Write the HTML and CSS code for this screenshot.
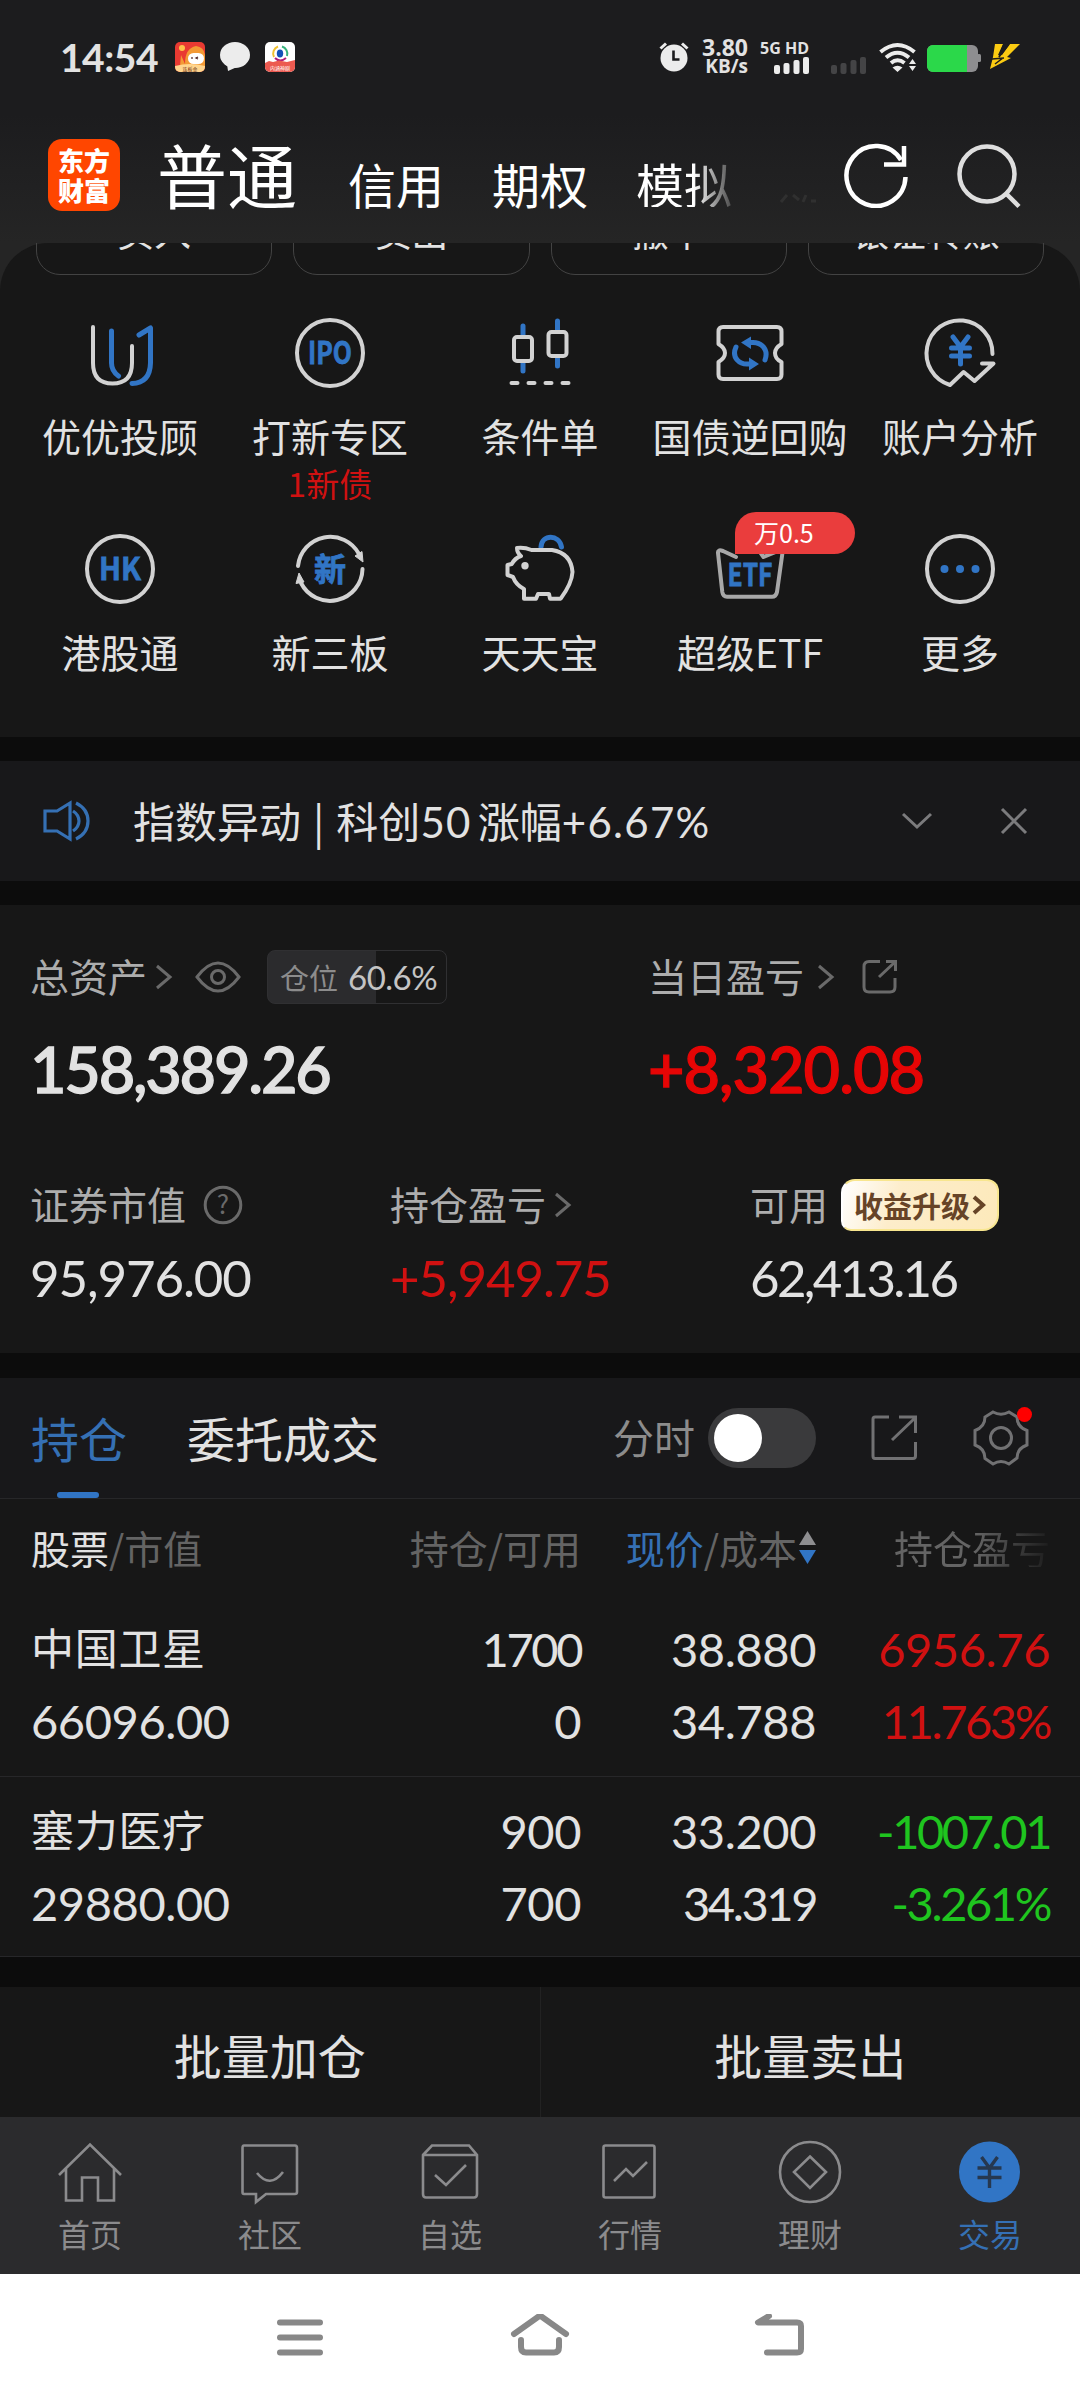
FILE: index.html
```html
<!DOCTYPE html>
<html lang="zh-CN">
<head>
  <meta charset="UTF-8">
  <title>东方财富 - 交易</title>
  <link rel="stylesheet" href="styles.css">
</head>
<body>

  <!-- 状态栏 -->
  <div class="status-bar">
    <span class="time">14:54</span>
    <svg class="app-icon" width="30" height="30" viewBox="0 0 30 30">
      <rect width="30" height="30" rx="5" fill="#e93a32"/>
      <path d="M5 24 L6 13 L10 22 Q10 6 21 4 Q29 5 30 13 V24 Z" fill="#f39a35"/>
      <circle cx="7" cy="6" r="3" fill="#ffc14a"/>
      <rect x="13" y="11" width="16" height="11" rx="5.5" fill="#fff"/>
      <path d="M17 15v2M23 15l-2 1 2 1" stroke="#4a2020" stroke-width="1.2" fill="none"/>
      <path d="M0 24 Q15 20 30 24 V25 a5 5 0 0 1 -5 5 H5 a5 5 0 0 1 -5 -5Z" fill="#ffd58e"/>
      <text x="15" y="29" font-size="5" text-anchor="middle" fill="#6b2a10">连板金</text>
    </svg>
    <svg class="app-icon" width="30" height="30" viewBox="0 0 30 30">
      <ellipse cx="15" cy="13" rx="15" ry="13" fill="#ececec"/>
      <path d="M7 22 L8 29 L17 25 Z" fill="#ececec"/>
    </svg>
    <svg class="app-icon" width="30" height="30" viewBox="0 0 30 30">
      <rect width="30" height="30" rx="5" fill="#fff"/>
      <path d="M9 15 A7.5 7.5 0 0 1 13 4.5" stroke="#f0c12f" stroke-width="2" fill="none"/>
      <path d="M17 4.5 A7.5 7.5 0 0 1 22 14" stroke="#37b27c" stroke-width="2" fill="none"/>
      <path d="M10 16 Q15 21 21 16" stroke="#b01f78" stroke-width="2" fill="none"/>
      <ellipse cx="15" cy="11.5" rx="3.2" ry="4" fill="#1352b8"/>
      <path d="M0 21 L4 19 L8 20 L14 18.5 L22 20 L30 18 V25 a5 5 0 0 1 -5 5 H5 a5 5 0 0 1 -5 -5Z" fill="#ec5a50"/>
      <text x="15" y="27.5" font-size="5" text-anchor="middle" fill="#fff">内涵神剧</text>
    </svg>
    <div class="status-right">
      <svg class="alarm" width="30" height="30" viewBox="0 0 30 30">
        <circle cx="15" cy="16" r="13.5" fill="#ececec"/>
        <path d="M1.5 6.5 L7 1.5 M28.5 6.5 L23 1.5" stroke="#ececec" stroke-width="3"/>
        <path d="M14.5 8.500 V17.500 H20.500" stroke="#1c1c1e" stroke-width="2.600" fill="none"/>
      </svg>
      <div class="speed"><span>3.80</span><span>KB/s</span></div>
      <div class="signal">
        <span>5G HD</span>
        <svg width="36" height="17" viewBox="0 0 36 17" fill="#ececec">
          <rect x="1" y="8" width="6" height="9" rx="2"/><rect x="10.500" y="6" width="6" height="11" rx="2"/>
          <rect x="20.500" y="3" width="6" height="14" rx="2"/><rect x="30" y="0" width="6" height="17" rx="2"/>
        </svg>
      </div>
      <svg class="signal-off" width="36" height="17" viewBox="0 0 36 17" fill="#444446">
        <rect x="1" y="8" width="6" height="9" rx="2"/><rect x="10.500" y="6" width="6" height="11" rx="2"/>
        <rect x="20.500" y="3" width="6" height="14" rx="2"/><rect x="30" y="0" width="6" height="17" rx="2"/>
      </svg>
      <svg class="wifi" width="38" height="30" viewBox="0 0 38 30">
        <g fill="none" stroke="#ececec" stroke-width="4">
          <path d="M1.500 10 Q18.500 -4 35.500 10"/>
          <path d="M7 15.500 Q18.500 6 30 15.500"/>
          <path d="M12 21 Q18.500 15.500 25.500 21"/>
        </g>
        <path d="M13.500 25.500 Q18.500 22 23.500 25.500 L18.500 30Z M30 22 L33.500 17 L37 22Z M30 24 L33.500 29 L37 24Z" fill="#ececec"/>
      </svg>
      <svg class="battery" width="54" height="27" viewBox="0 0 54 27">
        <rect width="51" height="27" rx="6" fill="#8e8e90"/>
        <rect x="50" y="9" width="4" height="8" rx="1.500" fill="#8e8e90"/>
        <path d="M6 0 H40 V27 H6 a6 6 0 0 1 -6 -6 V6 a6 6 0 0 1 6 -6Z" fill="#2bd84a"/>
      </svg>
      <svg class="bolt" width="30" height="26" viewBox="0 0 30 26">
        <path d="M5 0 H13 L8 11 L12 11 L20 0 H30 L17 13 L21 14 L0 25 L3 13 Z" fill="#fbcb12"/>
        <path d="M14 0 L9 13 L19 0 M2 15 L14 14 M5 20 L13 14" stroke="#1c1c1e" stroke-width="1.500" fill="none"/>
      </svg>
    </div>
  </div>

  <!-- 顶部导航 -->
  <div class="header">
    <div class="logo"><span>东方</span><span>财富</span></div>
    <div class="account-tabs">
      <span class="current">普通</span>
      <span>信用</span>
      <span>期权</span>
      <span class="fade">模拟</span>
      <svg width="36" height="10" viewBox="0 0 36 10" fill="none" stroke="#303030" stroke-width="3"><path d="M1 8 L7 1 M13 1 L19 6 M26 1 L23 8 M31 7 H36"/></svg>
    </div>
    <svg class="refresh" width="66" height="66" viewBox="0 0 66 66" fill="none" stroke="#fff" stroke-width="4.500">
      <path d="M62.500 35 A29.500 30 0 1 1 58 18"/>
      <path d="M61 4 V22.500 H41"/>
    </svg>
    <svg class="search" width="66" height="66" viewBox="0 0 66 66" fill="none" stroke="#dedede" stroke-width="4.500">
      <circle cx="30" cy="31" r="27.500"/>
      <path d="M48.500 50 L62 63.500"/>
    </svg>
  </div>

  <!-- 快捷入口 -->
  <div class="shortcuts">
    <div class="trade-buttons">
      <div class="trade-btn">买入</div>
      <div class="trade-btn">卖出</div>
      <div class="trade-btn">撤单</div>
      <div class="trade-btn">银证转账</div>
    </div>
    <div class="grid">
      <div class="cell">
        <svg class="icon" viewBox="0 0 80 80">
          <path class="w" d="M13 14 V50 Q13 70.500 32.500 70.500 Q52 70.500 52 50 V33"/>
          <path class="b" d="M31.500 18 V50 Q31.500 58 38.500 63"/>
          <path class="b" d="M59 22 L70.500 15 V50 Q70 70 52 70.500"/>
        </svg>
        <span>优优投顾</span>
      </div>
      <div class="cell">
        <svg class="icon" viewBox="0 0 80 80">
          <circle class="w" cx="40" cy="40" r="33"/>
          <text class="t" x="40" y="51" font-size="31" textLength="44" lengthAdjust="spacingAndGlyphs">IPO</text>
        </svg>
        <span>打新专区</span>
        <span class="note">1新债</span>
      </div>
      <div class="cell">
        <svg class="icon" viewBox="0 0 80 80">
          <path class="b" d="M23 13 V23 M23 49 V58 M57.500 8 V18 M57.500 44 V53"/>
          <rect class="w" x="14" y="24" width="18" height="24" rx="3"/>
          <rect class="w" x="48.500" y="19" width="18" height="24" rx="3"/>
          <path class="w" d="M11.500 70 h6 M28.500 70 h6 M45.500 70 h6 M62.500 70 h6"/>
        </svg>
        <span>条件单</span>
      </div>
      <div class="cell">
        <svg class="icon" viewBox="0 0 80 80">
          <path class="w" d="M13 14 H67 Q71.500 14 71.500 18.500 V31 Q65 35 65 40 Q65 46 71.500 49 V61.500 Q71.500 66 67 66 H13 Q8.500 66 8.500 61.500 V49 Q15 45 15 40 Q15 35 8.500 31 V18.500 Q8.500 14 13 14Z"/>
          <path class="b" d="M26 34 C21 45 30 51.500 38 51 H42 M55 47 C59 36 51 29 42 29.500 H39"/>
          <path d="M31 29.500 L41 23.500 V36Z M49 51 L39 44.500 V57.500Z" fill="#3175c5"/>
        </svg>
        <span>国债逆回购</span>
      </div>
      <div class="cell">
        <svg class="icon" viewBox="0 0 80 80">
          <path class="w" d="M72.500 41 A33 33 0 1 0 30 72 L43.600 59 L54.500 68 L73.500 50.500 H62"/>
          <path class="b" d="M33 24 L40.500 34 L48 24 M40.500 34 V51 M31.500 35 H49.500 M31.500 43 H49.500"/>
        </svg>
        <span>账户分析</span>
      </div>
      <div class="cell">
        <svg class="icon" viewBox="0 0 80 80">
          <circle class="w" cx="40" cy="40" r="33"/>
          <text class="t" x="40" y="51" font-size="31" textLength="42" lengthAdjust="spacingAndGlyphs">HK</text>
        </svg>
        <span>港股通</span>
      </div>
      <div class="cell">
        <svg class="icon" viewBox="0 0 80 80">
          <path class="w" d="M8 37 A32.500 32.500 0 0 1 69 25 M72.500 40 A32.500 32.500 0 0 1 11 54"/>
          <path d="M65 27 L72 22.500 L73 33Z M14 53 L6 54.500 L9 44Z" fill="#d2d2d2" stroke="#d2d2d2"/>
          <text class="t" x="40" y="52" font-size="32">新</text>
        </svg>
        <span>新三板</span>
      </div>
      <div class="cell">
        <svg class="icon" viewBox="0 0 80 80">
          <path class="b" d="M41 18 C42 5 59 5 61.500 18"/>
          <path class="w" d="M17 19 Q24 18 31.500 21 H52 Q71 24 72.500 43 Q72 54 60.700 69.700 H50 L49 65 H38 L36 69.700 H24 V60 Q16 56 13 48 L7.500 46 V36 L11.700 35 Q15 29 21 27 Q17 24 17 19Z"/>
          <circle cx="25" cy="36.700" r="3.700" fill="#d2d2d2"/>
        </svg>
        <span>天天宝</span>
      </div>
      <div class="cell">
        <svg class="icon" viewBox="0 0 80 80">
          <path class="w dim" d="M26 28 L13 22 Q7.500 20 8 24 L12.300 63 Q13 67.700 17 67.700 H62 Q66 67.700 67 63 L73 20 L53.500 28 L48 20"/>
          <text class="t" x="40" y="57" font-size="31" textLength="45" lengthAdjust="spacingAndGlyphs">ETF</text>
        </svg>
        <span>超级ETF</span>
        <b class="badge">万0.5</b>
      </div>
      <div class="cell">
        <svg class="icon" viewBox="0 0 80 80">
          <circle class="w" cx="40" cy="40" r="33"/>
          <g fill="#3175c5"><circle cx="24.500" cy="40" r="4"/><circle cx="40" cy="40" r="4"/><circle cx="55.500" cy="40" r="4"/></g>
        </svg>
        <span>更多</span>
      </div>
    </div>
  </div>

  <!-- 公告 -->
  <div class="notice">
    <svg width="50" height="44" viewBox="0 0 50 44" fill="none" stroke="#3570b4" stroke-width="3.200">
      <path d="M4 12 H16 L29 4 V40 L16 32 H4Z"/>
      <path d="M32 12 Q38 16 38 22 Q38 28 32 32 M35 4 Q47 10 47 22 Q47 34 35 40"/>
    </svg>
    <span class="notice-text">指数异动<i>|</i>科创<em>50</em>涨幅<em>+6.67%</em></span>
    <svg class="down" width="32" height="20" viewBox="0 0 32 20" fill="none" stroke="#7b7b7d" stroke-width="3"><path d="M2 3 L16 16 L30 3"/></svg>
    <svg width="28" height="28" viewBox="0 0 28 28" fill="none" stroke="#7b7b7d" stroke-width="3"><path d="M2 2 L26 26 M26 2 L2 26"/></svg>
  </div>

  <!-- 资产 -->
  <div class="assets">
    <div class="row two">
      <div class="item">
        <div class="label">
          <span>总资产</span>
          <svg class="arrow" viewBox="0 0 18 26"><path d="M2 2 L15 13 L2 24"/></svg>
          <svg class="eye" viewBox="0 0 46 32"><path d="M2 16 Q23 -12 44 16 Q23 44 2 16Z"/><circle cx="23" cy="16" r="6.500"/></svg>
          <div class="position"><span>仓位</span><em>60.6%</em></div>
        </div>
        <div class="big">158,389.26</div>
      </div>
      <div class="item">
        <div class="label">
          <span>当日盈亏</span>
          <svg class="arrow far" viewBox="0 0 18 26"><path d="M2 2 L15 13 L2 24"/></svg>
          <svg class="share" viewBox="0 0 36 36"><path d="M18 2.500 H7 Q2 2.500 2 7.500 V28 Q2 33 7 33 H28 Q33 33 33 28 V19 M17 18 L33 3 M24 2.500 H33.500 V12"/></svg>
        </div>
        <div class="big red">+8,320.08</div>
      </div>
    </div>
    <div class="row three">
      <div class="item">
        <div class="label">
          <span>证券市值</span>
          <svg class="help" viewBox="0 0 40 40"><circle cx="20" cy="20" r="17.800"/><text x="20" y="29" font-size="26">?</text></svg>
        </div>
        <div class="value">95,976.00</div>
      </div>
      <div class="item">
        <div class="label">
          <span>持仓盈亏</span>
          <svg class="arrow" viewBox="0 0 18 26"><path d="M2 2 L15 13 L2 24"/></svg>
        </div>
        <div class="value red">+5,949.75</div>
      </div>
      <div class="item">
        <div class="label">
          <span>可用</span>
          <div class="upgrade">收益升级<svg viewBox="0 0 14 20"><path d="M2 2 L11 10 L2 18"/></svg></div>
        </div>
        <div class="value narrow">62,413.16</div>
      </div>
    </div>
  </div>

  <!-- 持仓 -->
  <div class="tabs">
    <div class="tab active">持仓</div>
    <div class="tab">委托成交</div>
    <span class="switch-label">分时</span>
    <div class="switch"></div>
    <svg class="export" width="48" height="48" viewBox="0 0 48 48"><path d="M19 3 H5 Q3 3 3 5 V42 Q3 44.500 5 44.500 H43 Q45.500 44.500 45.500 42 V28 M22 26 L45 4 M29 3 H45.500 V19"/></svg>
    <div class="settings">
      <svg width="56" height="56" viewBox="0 0 56 56"><path d="M20 2 Q28 6.500 36 2 L44 7 Q44 17 54 20.500 V35 Q44 38.500 44 48 L36 54 Q28 49 20 54 L12 48.500 Q12 38.500 2 35 V20.500 Q12 17 12 7Z"/><circle cx="28" cy="28" r="10.500"/></svg>
      <b class="dot"></b>
    </div>
  </div>

  <div class="table">
    <div class="thead">
      <div><span class="on">股票</span>/市值</div>
      <div>持仓/可用</div>
      <div><span class="blue">现价</span>/成本<svg class="sort" viewBox="0 0 17 36"><path d="M0 15 L8.500 1 L17 15Z" fill="#8e8e90"/><path d="M0 20 H17 L8.500 34Z" fill="#3175c5"/></svg></div>
      <div class="fade-col">持仓盈亏</div>
    </div>
    <div class="trow">
      <div><span class="name">中国卫星</span><span>66096.00</span></div>
      <div><span class="narrow">1700</span><span>0</span></div>
      <div><span>38.880</span><span>34.788</span></div>
      <div class="red"><span>6956.76</span><span class="narrow">11.763%</span></div>
    </div>
    <div class="trow">
      <div><span class="name">塞力医疗</span><span>29880.00</span></div>
      <div><span>900</span><span>700</span></div>
      <div><span>33.200</span><span class="narrow">34.319</span></div>
      <div class="green"><span class="narrow">-1007.01</span><span class="narrow">-3.261%</span></div>
    </div>
  </div>

  <div class="batch">
    <div>批量加仓</div>
    <div>批量卖出</div>
  </div>

  <!-- 底部导航 -->
  <div class="tabbar">
    <div class="nav">
      <svg viewBox="0 0 66 66"><path d="M2 35 L33 4.500 L64 35 M9 28 V60.500 H25 V37.500 H41 V60.500 H57 V28"/></svg>
      <span>首页</span>
    </div>
    <div class="nav">
      <svg viewBox="0 0 66 66"><path d="M7 5.500 H58 Q60 5.500 60 8 V52 Q60 54 58 54 H29 L19 62 V54 H7 Q5.500 54 5.500 52 V8 Q5.500 5.500 7 5.500Z M20 33 Q33 49 46 32"/></svg>
      <span>社区</span>
    </div>
    <div class="nav">
      <svg viewBox="0 0 66 66"><path d="M6 15 L15 5.500 H52 L60 15 V54 Q60 57.500 57 57.500 H9 Q6 57.500 6 54Z M6 15 H60 M18 35 L29 45 L49 25"/></svg>
      <span>自选</span>
    </div>
    <div class="nav">
      <svg viewBox="0 0 66 66"><rect x="6.500" y="5.500" width="51" height="52" rx="2"/><path d="M17 41 L29 29 L36 36 L50 22"/></svg>
      <span>行情</span>
    </div>
    <div class="nav">
      <svg viewBox="0 0 66 66"><circle cx="33" cy="32" r="30"/><path d="M33 16.500 L49 32 L33 48 L17 32Z"/></svg>
      <span>理财</span>
    </div>
    <div class="nav active">
      <svg viewBox="0 0 66 66"><circle class="coin" cx="32.500" cy="32" r="30.500"/><path class="yen" d="M24.500 17 L32.500 28 L40.500 17 M32.500 28 V48 M20.500 28 H44.500 M20.500 37.500 H44.500"/></svg>
      <span>交易</span>
    </div>
  </div>

  <!-- 系统导航键 -->
  <div class="system-bar">
    <svg viewBox="0 0 64 50"><path d="M12 8.500 H52 M12 23.500 H52 M12 38.500 H52"/></svg>
    <svg viewBox="0 0 64 50"><path d="M6 20 L32 1.500 L58 20 M13 26 V33 Q13 38.500 18 38.500 H46 Q51 38.500 51 33 V26"/></svg>
    <svg viewBox="0 0 64 50"><path d="M21 2 L10 8.500 H49 Q53 8.500 53 12 V35 Q53 38.500 49 38.500 H19"/></svg>
  </div>

</body>
</html>
```
FILE: styles.css
```css
* {
  box-sizing: border-box;
}

body {
  margin: 0;
  width: 1080px;
  height: 2400px;
  overflow: hidden;
  background-color: #0c0c0c;
  color: #e2e2e2;
  font-family: "Noto Sans CJK SC", sans-serif;
  line-height: 1;
}

svg {
  display: block;
  flex: none;
}

em, i {
  font-style: normal;
}

/* 状态栏 */
.status-bar {
  display: flex;
  align-items: center;
  height: 114px;
  padding: 0 60px;
  background-color: #1c1c1e;
}

.time {
  width: 115px;
  font-family: "Lato", sans-serif;
  font-size: 39px;
  font-weight: bold;
  letter-spacing: -0.5px;
}

.app-icon {
  margin-right: 15px;
}

.status-right {
  display: flex;
  align-items: center;
  margin-left: auto;
  font-family: "Open Sans", sans-serif;
  font-weight: bold;
}

.speed {
  display: flex;
  flex-direction: column;
  align-items: flex-end;
  width: 49px;
  margin-left: 10px;
  font-size: 23px;
  line-height: 19px;
}

.speed span:last-child {
  font-size: 19px;
}

.signal {
  display: flex;
  flex-direction: column;
  align-items: flex-end;
  width: 50px;
  margin-left: 11px;
  font-size: 16px;
  line-height: 17px;
  white-space: nowrap;
}

.signal-off {
  margin: 17px 13px 0 21px;
}

.battery {
  margin: 3px 9px 0 10px;
}

/* 顶部导航 */
.header {
  display: flex;
  height: 129px;
  padding: 25px 57px 0 48px;
  background: linear-gradient(#1c1c1e, #252525);
}

.logo {
  display: flex;
  flex-direction: column;
  align-items: center;
  justify-content: center;
  width: 72px;
  height: 72px;
  border-radius: 14px;
  background-color: #ff4600;
  color: #fff;
  font-size: 26px;
  font-weight: 900;
  line-height: 30px;
}

.account-tabs {
  display: flex;
  flex: 1;
  align-items: baseline;
  margin-left: 37px;
  color: #fff;
  font-size: 48px;
  white-space: nowrap;
}

.account-tabs span {
  margin-right: 48px;
}

.account-tabs .current {
  margin-right: 51px;
  font-size: 70px;
}

.account-tabs .fade {
  background: linear-gradient(90deg, #fff 60%, #4a4a4a);
  background-clip: text;
  -webkit-background-clip: text;
  color: transparent;
}

.refresh {
  margin: 3px 48px 0 0;
}

.search {
  margin-top: 4px;
}

/* 快捷入口 */
.shortcuts {
  position: relative;
  isolation: isolate;
  height: 494px;
  overflow: hidden;
  background: linear-gradient(#252525, #252525) top / 100% 60px no-repeat;
}

.shortcuts::before {
  content: "";
  position: absolute;
  inset: 0;
  z-index: -1;
  border-radius: 48px 48px 0 0;
  background-color: #171717;
}

.trade-buttons {
  display: flex;
  gap: 21px;
  height: 32px;
  padding: 0 36px;
  align-items: flex-end;
}

.trade-btn {
  flex: 1;
  height: 86px;
  border: 1px solid #434343;
  border-radius: 24px;
  font-size: 37px;
  line-height: 82px;
  text-align: center;
}

.grid {
  display: grid;
  grid-template-columns: repeat(5, 210px);
  grid-auto-rows: 216px;
  padding: 38px 15px 0;
}

.cell {
  position: relative;
  display: flex;
  flex-direction: column;
  align-items: center;
  font-size: 39px;
  white-space: nowrap;
}

.icon {
  width: 80px;
  height: 80px;
  margin-bottom: 23px;
}

.icon .w, .icon .b {
  fill: none;
  stroke: #d2d2d2;
  stroke-width: 4;
  stroke-linecap: round;
  stroke-linejoin: round;
}

.icon .b {
  stroke: #3175c5;
  stroke-width: 5;
}

.icon .dim {
  stroke: #a8a8a8;
}

.icon .t {
  fill: #3175c5;
  stroke: #3175c5;
  stroke-width: 0.8;
  font-weight: bold;
  text-anchor: middle;
}

.note {
  margin-top: 12px;
  color: #d01111;
  font-size: 33px;
}

.badge {
  position: absolute;
  left: 90px;
  top: -17px;
  width: 120px;
  height: 42px;
  padding-left: 19px;
  border-radius: 21px 21px 21px 0;
  background-color: #ea3d3d;
  color: #fff;
  font-size: 25px;
  font-weight: normal;
  line-height: 41px;
}

/* 公告 */
.notice {
  display: flex;
  align-items: center;
  height: 120px;
  margin: 24px 0;
  padding: 0 52px 0 41px;
  background-color: #18181a;
}

.notice-text {
  flex: 1;
  margin-left: 42px;
  font-size: 42px;
}

.notice-text i {
  margin: 0 12px;
}

.notice-text em {
  font-family: "Lato", sans-serif;
  letter-spacing: 1.3px;
}

.notice-text em:first-of-type {
  margin-right: 6px;
}

.down {
  margin-right: 67px;
}

/* 资产 */
.assets {
  height: 448px;
  padding: 43px 30px 0;
  background-color: #171717;
}

.row {
  display: grid;
  height: 228px;
}

.two {
  grid-template-columns: 618px 1fr;
}

.three {
  grid-template-columns: 360px 360px 1fr;
}

.label {
  display: flex;
  align-items: center;
  height: 58px;
  color: #adadad;
  font-size: 39px;
  white-space: nowrap;
}

.label > span {
  margin-top: -4px;
}

.label svg {
  fill: none;
  stroke: #6a6a6a;
  stroke-width: 3;
}

.label .arrow {
  width: 18px;
  height: 26px;
  margin-left: 8px;
}

.label .far {
  margin-left: 13px;
}

.eye {
  width: 46px;
  height: 32px;
  margin-left: 22px;
}

.share {
  width: 36px;
  height: 36px;
  margin-left: 27px;
}

.help {
  width: 40px;
  height: 40px;
  margin-left: 17px;
}

.help text {
  fill: #6a6a6a;
  stroke: none;
  text-anchor: middle;
}

.position {
  display: flex;
  align-items: center;
  width: 180px;
  height: 54px;
  margin-left: 26px;
  padding-left: 12px;
  border: 1px solid #303032;
  border-radius: 8px;
  background: linear-gradient(90deg, #2b2b2d 60.6%, transparent 60.6%);
  color: #8c8c8c;
  font-size: 29px;
}

.position em {
  margin-left: 10px;
  color: #c4c4c4;
  font-family: "Lato", sans-serif;
  font-size: 33px;
  letter-spacing: -0.5px;
}

.big, .value {
  font-family: "Lato", sans-serif;
}

.big {
  margin-top: 31px;
  font-size: 63px;
  font-weight: 500;
  letter-spacing: -2.2px;
  -webkit-text-stroke: 1.3px;
}

.big.red {
  letter-spacing: -1px;
}

.value {
  margin-top: 18px;
  font-size: 51px;
  letter-spacing: -1.1px;
}

.value.narrow {
  letter-spacing: -2.7px;
}

.red {
  color: #e60505;
}

.value.red, .trow .red {
  color: #d01111;
}

.green {
  color: #1fc51f;
}

.upgrade {
  display: flex;
  align-items: center;
  justify-content: center;
  width: 158px;
  height: 52px;
  margin-left: 13px;
  border: 2px solid #f8e68f;
  border-left-color: #fff;
  border-radius: 14px 12px 16px 10px;
  background: linear-gradient(110deg, #fff, #fdedcb 35%, #fde9ba);
  color: #674427;
  font-size: 29px;
  font-weight: bold;
}

.upgrade svg {
  width: 14px;
  height: 20px;
  margin-left: 2px;
  stroke: #674427;
  stroke-width: 4;
}

/* 持仓 */
.tabs {
  display: flex;
  align-items: center;
  height: 121px;
  margin-top: 25px;
  padding: 0 51px 0 31px;
  border-bottom: 1px solid #272729;
  background-color: #18181a;
}

.tab {
  position: relative;
  margin: -3px 60px 0 0;
  font-size: 48px;
}

.tab.active {
  color: #3570b4;
}

.tab.active::after {
  content: "";
  position: absolute;
  left: 26px;
  bottom: -37px;
  width: 42px;
  height: 6px;
  border-radius: 3px;
  background-color: #3175c5;
}

.switch-label {
  margin: -3px 0 0 auto;
  color: #8c8c8c;
  font-size: 41px;
}

.switch {
  width: 108px;
  height: 60px;
  margin-left: 13px;
  padding: 6px;
  border-radius: 30px;
  background-color: #3a3a3c;
}

.switch::before {
  content: "";
  display: block;
  width: 48px;
  height: 48px;
  border-radius: 50%;
  background-color: #fff;
}

.tabs svg {
  fill: none;
  stroke: #717173;
  stroke-width: 3;
}

.export {
  margin: 0 55px 0 54px;
}

.settings {
  position: relative;
}

.dot {
  position: absolute;
  right: -3px;
  top: -3px;
  width: 15px;
  height: 15px;
  border-radius: 50%;
  background-color: #f00;
}

.table {
  height: 458px;
  border-bottom: 1px solid #272729;
  background-color: #171717;
}

.thead, .trow {
  display: grid;
  grid-template-columns: 300px 250px 235px 234px;
  padding: 0 30px 0 31px;
}

.thead {
  align-items: center;
  height: 96px;
  color: #646464;
  font-size: 39px;
}

.thead .on {
  color: #e2e2e2;
}

.thead .blue {
  color: #3570b4;
}

.thead div {
  display: flex;
}

.thead div + div, .trow div + div {
  justify-content: flex-end;
  text-align: right;
}

.sort {
  width: 17px;
  height: 36px;
  margin: 2px 0 0 2px;
}

.fade-col {
  background: linear-gradient(90deg, #646464 68%, #1c1c1c);
  background-clip: text;
  -webkit-background-clip: text;
  color: transparent;
}

.trow {
  height: 181px;
  padding-top: 18px;
  font-family: "Lato", "Noto Sans CJK SC", sans-serif;
  font-size: 47px;
  letter-spacing: -0.4px;
}

.trow + .trow {
  border-top: 1px solid #272729;
}

.trow span {
  display: block;
  height: 72px;
  line-height: 72px;
}

.trow .narrow {
  letter-spacing: -2.4px;
}

.trow .name {
  font-size: 43px;
  letter-spacing: 0.7px;
}

.batch {
  display: flex;
  height: 130px;
  margin-top: 30px;
  background-color: #171717;
}

.batch div {
  flex: 1;
  font-size: 48px;
  line-height: 134px;
  text-align: center;
}

.batch div:first-child {
  border-right: 1px solid #222;
}

/* 底部导航 */
.tabbar {
  display: flex;
  height: 157px;
  background-color: #2b2b2d;
}

.nav {
  display: flex;
  flex: 1;
  flex-direction: column;
  align-items: center;
  padding-top: 23px;
  color: #8b8b8d;
  font-size: 32px;
}

.nav svg {
  width: 66px;
  height: 66px;
  margin-bottom: 11px;
  fill: none;
  stroke: #8b8b8d;
  stroke-width: 2.6;
}

.nav.active {
  color: #3570b4;
}

.nav .coin {
  fill: #3175c5;
  stroke: none;
}

.nav .yen {
  stroke: #263850;
  stroke-width: 3.4;
}

/* 系统导航键 */
.system-bar {
  display: flex;
  justify-content: center;
  gap: 176px;
  height: 126px;
  padding-top: 40px;
  background-color: #fff;
}

.system-bar svg {
  width: 64px;
  height: 50px;
  fill: none;
  stroke: #888;
  stroke-width: 6;
  stroke-linecap: round;
  stroke-linejoin: round;
}
```
